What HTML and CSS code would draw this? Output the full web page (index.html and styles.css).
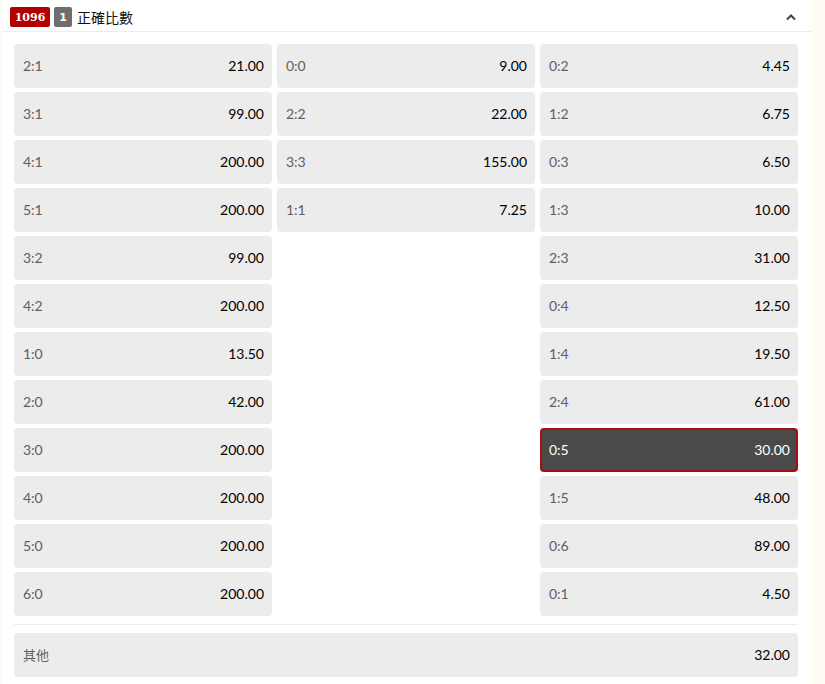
FILE: index.html
```html
<!DOCTYPE html>
<html>
<head>
<meta charset="utf-8">
<link rel="stylesheet" href="styles.css">
</head>
<body>
<div class="panel">
  <div class="header">
    <span class="badge badge-red">1096</span>
    <span class="badge badge-gray">1</span>
    <span class="title">正確比數</span>
    <svg class="chev" width="12" height="8" viewBox="0 0 12 8"><polyline points="2,6.5 6,2.5 10,6.5" fill="none" stroke="#444" stroke-width="2"/></svg>
  </div>
  <div class="body">
    <div class="grid">
      <div class="col">
        <div class="cell"><span class="lbl">2:1</span><span class="val">21.00</span></div>
        <div class="cell"><span class="lbl">3:1</span><span class="val">99.00</span></div>
        <div class="cell"><span class="lbl">4:1</span><span class="val">200.00</span></div>
        <div class="cell"><span class="lbl">5:1</span><span class="val">200.00</span></div>
        <div class="cell"><span class="lbl">3:2</span><span class="val">99.00</span></div>
        <div class="cell"><span class="lbl">4:2</span><span class="val">200.00</span></div>
        <div class="cell"><span class="lbl">1:0</span><span class="val">13.50</span></div>
        <div class="cell"><span class="lbl">2:0</span><span class="val">42.00</span></div>
        <div class="cell"><span class="lbl">3:0</span><span class="val">200.00</span></div>
        <div class="cell"><span class="lbl">4:0</span><span class="val">200.00</span></div>
        <div class="cell"><span class="lbl">5:0</span><span class="val">200.00</span></div>
        <div class="cell"><span class="lbl">6:0</span><span class="val">200.00</span></div>
      </div>
      <div class="col">
        <div class="cell"><span class="lbl">0:0</span><span class="val">9.00</span></div>
        <div class="cell"><span class="lbl">2:2</span><span class="val">22.00</span></div>
        <div class="cell"><span class="lbl">3:3</span><span class="val">155.00</span></div>
        <div class="cell"><span class="lbl">1:1</span><span class="val">7.25</span></div>
      </div>
      <div class="col">
        <div class="cell"><span class="lbl">0:2</span><span class="val">4.45</span></div>
        <div class="cell"><span class="lbl">1:2</span><span class="val">6.75</span></div>
        <div class="cell"><span class="lbl">0:3</span><span class="val">6.50</span></div>
        <div class="cell"><span class="lbl">1:3</span><span class="val">10.00</span></div>
        <div class="cell"><span class="lbl">2:3</span><span class="val">31.00</span></div>
        <div class="cell"><span class="lbl">0:4</span><span class="val">12.50</span></div>
        <div class="cell"><span class="lbl">1:4</span><span class="val">19.50</span></div>
        <div class="cell"><span class="lbl">2:4</span><span class="val">61.00</span></div>
        <div class="cell selected"><span class="lbl">0:5</span><span class="val">30.00</span></div>
        <div class="cell"><span class="lbl">1:5</span><span class="val">48.00</span></div>
        <div class="cell"><span class="lbl">0:6</span><span class="val">89.00</span></div>
        <div class="cell"><span class="lbl">0:1</span><span class="val">4.50</span></div>
      </div>
    </div>
    <div class="sep"></div>
    <div class="cell other"><span class="lbl">其他</span><span class="val">32.00</span></div>
  </div>
</div>
</body>
</html>
```
FILE: styles.css
```css
html, body {
  margin: 0;
  padding: 0;
  background: #fffcf3;
}
body {
  font-family: Lato, "Noto Sans CJK TC", sans-serif;
  font-size: 14px;
}
.panel {
  margin-left: 2px;
  width: 809px;
  height: 684px;
  background: #ffffff;
}
.header {
  padding: 7px 14px 4px 8px;
  border-bottom: 1px solid #ececec;
  display: flex;
  align-items: center;
}
.badge {
  display: inline-flex;
  align-items: center;
  justify-content: center;
  height: 20px;
  border-radius: 2px;
  color: #fff;
  font-weight: bold;
  font-size: 11px;
}
.badge-red {
  width: 40px;
  background: #b20000;
  font-family: "DejaVu Serif", serif;
}
.badge-gray {
  width: 18px;
  margin-left: 4px;
  background: #6e6e6e;
  font-family: "DejaVu Sans", sans-serif;
}
.title {
  margin-left: 5px;
  font-family: "Noto Sans CJK TC", sans-serif;
  font-size: 14px;
  color: #111;
  line-height: 20px;
}
.chev {
  margin-left: auto;
}
.body {
  padding: 12px 13px 0 12px;
}
.grid {
  display: grid;
  grid-template-columns: 258px 258px 258px;
  column-gap: 5px;
  align-items: start;
}
.col {
  display: flex;
  flex-direction: column;
  gap: 4px;
}
.cell {
  height: 44px;
  box-sizing: border-box;
  background: #ececec;
  border-radius: 4px;
  display: flex;
  align-items: center;
  justify-content: space-between;
  padding: 0 8px 2px 9px;
}
.lbl {
  color: #5f5f5f;
}
.val {
  color: #000;
}
.selected {
  background: #4a4a4a;
  border: 2px solid #a50f0f;
  padding: 0 6px 2px 7px;
}
.selected .lbl, .selected .val {
  color: #fff;
}
.sep {
  height: 1px;
  background: #ececec;
  margin: 8px 0;
}
.other {
  width: 784px;
}
.other .lbl {
  font-family: "Noto Sans CJK TC", sans-serif;
  font-size: 13px;
}
```
